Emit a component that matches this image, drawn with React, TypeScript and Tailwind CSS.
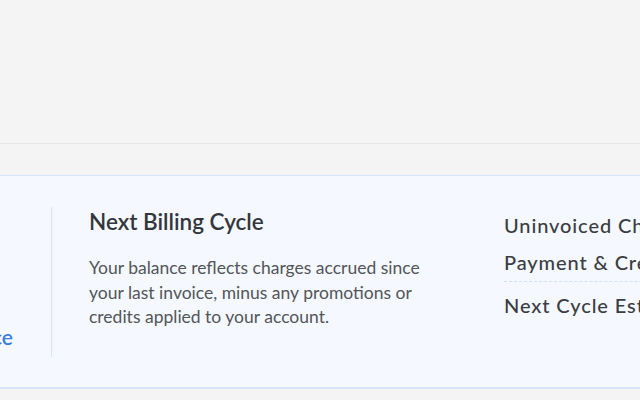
const rows = [
  { label: 'Uninvoiced Charges', value: '$1,284.50' },
  { label: 'Payment & Credits', value: '-$120.00' },
];

export default function App() {
  return (
    <div className="w-[640px] h-[400px] overflow-hidden bg-[#f4f4f4] font-['Lato',sans-serif]">
      {/* top strip */}
      <div className="h-[144px] border-b border-[#e6e6e6]" />

      <div className="pt-[31px]">
        <section className="-ml-[200px] w-[1100px] flex bg-[#f5f8fe] border-t border-b-2 border-[#d6e5f9] pt-[31px] pb-[30px]">
          {/* left column, mostly off screen */}
          <div className="w-[251px] shrink-0 flex flex-col justify-end items-end pr-[38px] pb-[6px]">
            <a className="text-[21px] leading-[28px] font-semibold text-[#3b7ddd]">View Invoice</a>
          </div>

          <div className="w-px h-[150px] shrink-0 bg-[#d6e5f9]" />

          {/* middle */}
          <div className="w-[452px] shrink-0 pl-[37px]">
            <h2 className="pt-px text-[22.5px] leading-[28px] font-semibold text-[#33373d]">Next Billing Cycle</h2>
            <p className="mt-[20px] max-w-[340px] text-[17.5px] leading-[24.5px] text-[#525559]">
              Your balance reflects charges accrued since your last invoice, minus any promotions or
              credits applied to your account.
            </p>
          </div>

          {/* summary */}
          <div className="w-[440px] shrink-0 pt-[6px]">
            {rows.map((r, i) => (
              <div
                key={r.label}
                className={`flex justify-between text-[20px] leading-[24px] font-medium tracking-[0.9px] text-[#3a3d42] ${
                  i === 0 ? 'pb-[13px]' : 'pb-[7px] border-b border-dashed border-[#cfe0f7]'
                }`}
              >
                <span>{r.label}</span>
                <span>{r.value}</span>
              </div>
            ))}
            <div className="flex justify-between mt-[11px] text-[20px] leading-[24px] font-medium tracking-[0.9px] text-[#3a3d42]">
              <span>Next Cycle Estimate</span>
              <span>$1,164.50</span>
            </div>
          </div>
        </section>
      </div>
    </div>
  );
}
